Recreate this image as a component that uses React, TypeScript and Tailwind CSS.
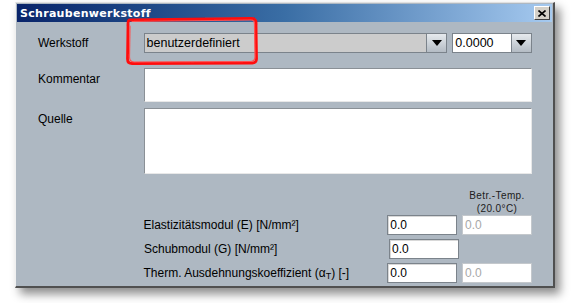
import React from "react";

const font = { fontFamily: '"Liberation Sans", Arial, sans-serif' };

function Arrow() {
  return (
    <svg width="10" height="6" viewBox="0 0 10 6">
      <path d="M0 0 L10 0 L5 6 Z" fill="#000" />
    </svg>
  );
}

function DropBtn() {
  return (
    <div className="w-[20px] h-full flex items-center justify-center border-l border-[#7b838b] bg-gradient-to-b from-[#e6eaee] to-[#b4bcc4]">
      <Arrow />
    </div>
  );
}

function NumInput({ value, disabled }: { value: string; disabled?: boolean }) {
  return (
    <div
      className={
        "w-[70px] h-[20px] bg-white flex items-center pl-[2px] text-[12px] " +
        (disabled
          ? "border border-[#c4c8cc] text-[#a8a8a8]"
          : "border border-[#7b838b] shadow-[inset_1px_1px_0_#d8d8d8] text-black")
      }
    >
      {value}
    </div>
  );
}

export default function App() {
  return (
    <div className="w-[571px] h-[303px] bg-white overflow-hidden relative" style={font}>
      <div className="ml-[15px] mt-[2px] w-[540px] h-[286px] flex flex-col border-l border-t border-l-[#f0f0f0] border-t-[#e0e0e0] border-r-2 border-b-2 border-r-[#505050] border-b-[#505050] bg-[#aeb8c2] shadow-[5px_6px_9px_rgba(0,0,0,0.45)]">
        {/* title bar */}
        <div className="h-[18px] mx-[1px] mt-[1px] flex items-center justify-between bg-gradient-to-r from-[#0a246a] via-[#3a6ea5] to-[#a6caf0] pl-[3px] pr-[2px]">
          <span className="text-white font-bold leading-none tracking-[0.3px]" style={{ fontFamily: '"DejaVu Sans", Tahoma, sans-serif', fontSize: 11 }}>
            Schraubenwerkstoff
          </span>
          <div className="w-[16px] h-[14px] bg-[#d4d0c8] border border-t-white border-l-white border-r-[#404040] border-b-[#404040] flex items-center justify-center">
            <svg width="8" height="7" viewBox="0 0 8 7">
              <path d="M0.5 0.5 L7.5 6.5 M7.5 0.5 L0.5 6.5" stroke="#000" strokeWidth="1.6" />
            </svg>
          </div>
        </div>

        {/* body */}
        <div className="flex flex-col pl-[22px] pr-[21px] text-[12px] text-black">
          {/* Werkstoff */}
          <div className="flex items-center mt-[11px] h-[20px]">
            <div className="w-[106px]">Werkstoff</div>
            <div className="w-[305px] h-[20px] flex border border-[#7b838b] bg-[#cccccc]">
              <div className="flex-1 flex items-center pl-[2px] text-[12.5px]">benutzerdefiniert</div>
              <DropBtn />
            </div>
            <div className="ml-[5px] w-[80px] h-[20px] flex border border-[#7b838b] bg-white">
              <div className="flex-1 flex items-center pl-[2px] text-[12.5px]">0.0000</div>
              <DropBtn />
            </div>
          </div>

          {/* Kommentar */}
          <div className="flex mt-[15px]">
            <div className="w-[106px] pt-[2px]">Kommentar</div>
            <div className="w-[390px] h-[34px] bg-white border border-[#8a9096] border-r-[#e8e8e8] border-b-[#e8e8e8]" />
          </div>

          {/* Quelle */}
          <div className="flex mt-[6px]">
            <div className="w-[106px] pt-[2px]">Quelle</div>
            <div className="w-[390px] h-[66px] bg-white border border-[#8a9096] border-r-[#e8e8e8] border-b-[#e8e8e8]" />
          </div>

          {/* header */}
          <div className="flex justify-end mt-[15px]">
            <div className="w-[70px] flex flex-col items-center text-[10px] leading-[13px] tracking-[0.4px] text-[#202020]">
              <span>Betr.-Temp.</span>
              <span>(20.0°C)</span>
            </div>
          </div>

          {/* rows */}
          <div className="flex items-center mt-[0px] h-[20px]">
            <div className="w-[106px]" />
            <div className="w-[245px]">Elastizitätsmodul (E) [N/mm²]</div>
            <NumInput value="0.0" />
            <div className="ml-[5px]">
              <NumInput value="0.0" disabled />
            </div>
          </div>
          <div className="flex items-center mt-[4px] h-[20px]">
            <div className="w-[106px]" />
            <div className="w-[245px]">Schubmodul (G) [N/mm²]</div>
            <NumInput value="0.0" />
          </div>
          <div className="flex items-center mt-[4px] h-[20px]">
            <div className="w-[106px]" />
            <div className="w-[245px]">
              Therm. Ausdehnungskoeffizient (α<sub className="text-[9px] relative top-[2px]">T</sub>) [-]
            </div>
            <NumInput value="0.0" />
            <div className="ml-[5px]">
              <NumInput value="0.0" disabled />
            </div>
          </div>
        </div>
      </div>

      {/* red hand-drawn highlight */}
      <svg className="absolute left-0 top-0 pointer-events-none" width="571" height="303">
        <defs>
          <filter id="rough">
            <feGaussianBlur stdDeviation="0.5" />
          </filter>
        </defs>
        <g filter="url(#rough)" fill="none" stroke="#ff1010" strokeLinecap="round" strokeLinejoin="round">
          <path d="M130 20 L251 18.5 Q256 18.5 256 22 L256.5 59 Q256.5 63 252 63 L132 63.5 Q127.5 63.5 127.5 59 L128 24 Q128 20 130 20" strokeWidth="2.8" />
          <path d="M132 21.5 L251 20 Q254.5 20 254.5 24 L255 57 Q255 61.5 250 61.5 L134 62 Q129.5 62 129.5 57 L130 26" strokeWidth="1.2" stroke="#ff5050" />
        </g>
      </svg>
    </div>
  );
}
